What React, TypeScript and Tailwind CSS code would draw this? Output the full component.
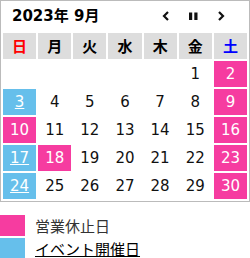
const weeks: (number | null)[][] = [
  [null, null, null, null, null, 1, 2],
  [3, 4, 5, 6, 7, 8, 9],
  [10, 11, 12, 13, 14, 15, 16],
  [17, 18, 19, 20, 21, 22, 23],
  [24, 25, 26, 27, 28, 29, 30],
];

const holidays = [2, 9, 10, 16, 18, 23, 30];
const events = [3, 17, 24];

const days = ["日", "月", "火", "水", "木", "金", "土"];

function cellClass(d: number | null) {
  if (d && events.includes(d)) return "bg-[#66bfeb] text-white underline";
  if (d && holidays.includes(d)) return "bg-[#f63ca0] text-white";
  return "text-[#111]";
}

export default function App() {
  return (
    <div className="w-[250px] h-[258px] bg-white" style={{ fontFamily: '"Noto Sans CJK JP", sans-serif' }}>
      <div className="border border-[#bbbbbb]">
        <div className="flex items-center h-[30px] pl-[11px] pr-[24px]">
          <div
            className="font-bold text-[15px] text-black leading-none flex-1"
            style={{ fontFamily: '"DejaVu Sans", "Noto Sans CJK JP", sans-serif' }}
          >
            2023年 9月
          </div>
          <div className="flex items-center gap-[19px]">
            <svg width="8" height="10" viewBox="0 0 8 10">
              <path d="M6 1 L2 5 L6 9" fill="none" stroke="#111" strokeWidth="2.2" />
            </svg>
            <svg width="9" height="10" viewBox="0 0 9 10">
              <rect x="0" y="1.5" width="3.2" height="7.5" fill="#111" />
              <rect x="5.3" y="1.5" width="3.2" height="7.5" fill="#111" />
            </svg>
            <svg width="8" height="10" viewBox="0 0 8 10">
              <path d="M2 1 L6 5 L2 9" fill="none" stroke="#111" strokeWidth="2.2" />
            </svg>
          </div>
        </div>
        <table className="w-full border-separate border-spacing-[2px] table-fixed">
          <thead>
            <tr>
              {days.map((d, i) => (
                <th
                  key={d}
                  className={`h-[26px] p-0 bg-[#dddddd] font-bold text-[15px] ${i === 0 ? "text-[#ff0000]" : i === 6 ? "text-[#0000ff]" : "text-black"}`}
                >
                  {d}
                </th>
              ))}
            </tr>
          </thead>
          <tbody style={{ fontFamily: '"DejaVu Sans", sans-serif' }}>
            {weeks.map((w, wi) => (
              <tr key={wi}>
                {w.map((d, di) => (
                  <td key={di} className={`h-[26px] p-0 text-center text-[15px] ${cellClass(d)}`}>
                    {d ?? ""}
                  </td>
                ))}
              </tr>
            ))}
          </tbody>
        </table>
      </div>
      <div className="mt-[13px] flex flex-col gap-[2px] text-[15px] leading-none">
        <div className="flex items-center h-[21px]">
          <div className="w-[25px] h-full bg-[#f63ca0]" />
          <span className="ml-[10px] text-[#333]">営業休止日</span>
        </div>
        <div className="flex items-center h-[21px]">
          <div className="w-[25px] h-full bg-[#66bfeb]" />
          <span className="ml-[10px] text-black underline">イベント開催日</span>
        </div>
      </div>
    </div>
  );
}
